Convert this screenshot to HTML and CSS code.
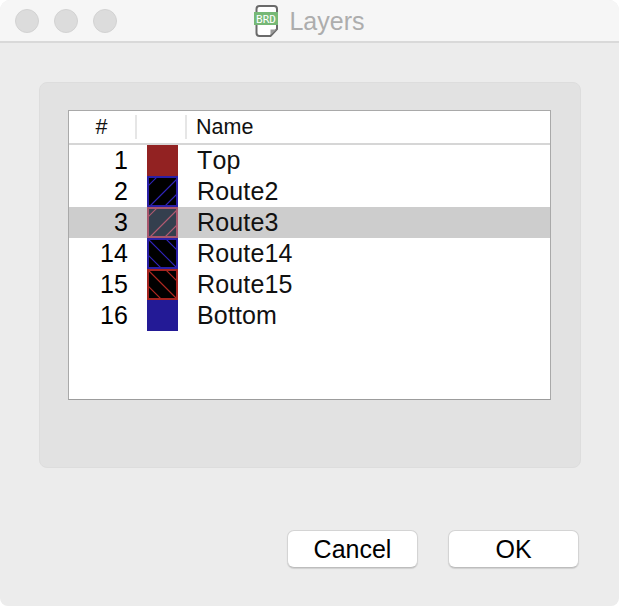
FILE: index.html
```html
<!DOCTYPE html>
<html lang="en">
  <head>
    <meta charset="UTF-8" />
    <title>Layers</title>
    <link rel="stylesheet" href="styles.css">
  </head>
  <body>
    <div class="window">
      <div class="titlebar">
        <div class="lights">
          <span class="light"></span>
          <span class="light"></span>
          <span class="light"></span>
        </div>
        <div class="title">
          <svg class="doc-icon" width="25" height="32" viewBox="0 0 25 32">
            <path d="M2.500 8V4Q2.500 1 5.500 1H20Q23 1 23 4V24L16.500 31H5.500Q2.500 31 2.500 28V20" fill="#fff" stroke="#6a6a6a" stroke-width="2"/>
            <path d="M16.500 30V24.500H22.500Z" fill="#9a9a9a"/>
            <rect x="0" y="7" width="24" height="13" fill="#76b876"/>
            <text x="12" y="17.500" class="doc-text">BRD</text>
          </svg>
          <span class="title-text">Layers</span>
        </div>
      </div>
      <div class="content">
        <div class="panel">
          <div class="layer-list">
            <div class="list-head">
              <div class="head-cell head-num">#</div>
              <div class="head-cell"></div>
              <div class="head-cell head-name">Name</div>
            </div>
            <div class="row">
              <div class="num">1</div>
              <svg class="swatch" width="31" height="31"><rect width="31" height="31" fill="#922222"/></svg>
              <div class="name">Top</div>
            </div>
            <div class="row">
              <div class="num">2</div>
              <svg class="swatch" width="31" height="31">
                <rect width="31" height="31" fill="#000"/>
                <path d="M-1 12L12 -1M3 30L30 3M18 30L30 18" class="hatch" stroke="#2f24b8"/>
                <rect x="1" y="1" width="29" height="29" fill="none" stroke="#2a1fa6" stroke-width="2"/>
              </svg>
              <div class="name">Route2</div>
            </div>
            <div class="row selected">
              <div class="num">3</div>
              <svg class="swatch" width="31" height="31">
                <rect width="31" height="31" fill="#343f4e"/>
                <path d="M-1 12L12 -1M3 30L30 3M18 30L30 18" class="hatch" stroke="#b05a70"/>
                <rect x="1" y="1" width="29" height="29" fill="none" stroke="#a8566c" stroke-width="2"/>
              </svg>
              <div class="name">Route3</div>
            </div>
            <div class="row">
              <div class="num">14</div>
              <svg class="swatch" width="31" height="31">
                <rect width="31" height="31" fill="#000"/>
                <path d="M18 0L31 13M1 1L30 30M0 16L15 31" class="hatch" stroke="#2f24b8"/>
                <rect x="1" y="1" width="29" height="29" fill="none" stroke="#2a1fa6" stroke-width="2"/>
              </svg>
              <div class="name">Route14</div>
            </div>
            <div class="row">
              <div class="num">15</div>
              <svg class="swatch" width="31" height="31">
                <rect width="31" height="31" fill="#000"/>
                <path d="M18 0L31 13M1 1L30 30M0 16L15 31" class="hatch" stroke="#b02820"/>
                <rect x="1" y="1" width="29" height="29" fill="none" stroke="#a52420" stroke-width="2"/>
              </svg>
              <div class="name">Route15</div>
            </div>
            <div class="row">
              <div class="num">16</div>
              <svg class="swatch" width="31" height="31"><rect width="31" height="31" fill="#231a96"/></svg>
              <div class="name">Bottom</div>
            </div>
          </div>
        </div>
        <div class="actions">
          <button class="btn">Cancel</button>
          <button class="btn">OK</button>
        </div>
      </div>
    </div>
  </body>
</html>
```

FILE: styles.css
```css
* {
  margin: 0;
  padding: 0;
  box-sizing: border-box;
  font-family: "Liberation Sans", Arial, sans-serif;
  font-kerning: none;
}

body {
  background: #fff;
  overflow: hidden;
}

.window {
  width: 619px;
  height: 606px;
  background: #ececec;
  border-radius: 10px 10px 8px 8px;
  overflow: hidden;
}

.titlebar {
  height: 43px;
  background: #f6f6f6;
  border-bottom: 2px solid #d9d9d9;
  display: grid;
  grid-template-columns: 1fr auto 1fr;
  align-items: center;
}

.lights {
  display: flex;
  gap: 15px;
  padding-left: 15px;
}

.light {
  width: 24px;
  height: 24px;
  border-radius: 50%;
  background: #dcdcdc;
  border: 1px solid #d2d2d2;
}

.title {
  display: flex;
  align-items: center;
  gap: 10px;
  font-size: 25px;
  color: #adadad;
}

.title-text {
  padding-top: 2px;
}

.doc-text {
  font-family: "DejaVu Sans Mono", monospace;
  font-size: 11px;
  fill: #fff;
  text-anchor: middle;
}

.content {
  padding: 39px 38px 0 39px;
}

.panel {
  height: 386px;
  background: #e2e2e2;
  border: 1px solid #dddddd;
  border-radius: 8px;
  padding: 27px 28px;
}

.layer-list {
  width: 483px;
  height: 290px;
  background: #fff;
  border: 1px solid #a9a9a9;
  border-bottom-color: #9c9c9c;
}

.list-head {
  height: 34px;
  display: grid;
  grid-template-columns: 68px 50px 1fr;
  align-items: center;
  border-bottom: 2px solid #d6d6d6;
  font-size: 21.500px;
  color: #111;
}

.head-cell {
  height: 24px;
  line-height: 24px;
  border-right: 2px solid #e6e6e6;
}

.head-cell:last-child {
  border-right: none;
}

.head-num {
  text-align: center;
  padding-right: 1px;
}

.head-name {
  padding-left: 9px;
}

.row {
  height: 31px;
  display: grid;
  grid-template-columns: 59px 31px 1fr;
  column-gap: 19px;
  align-items: center;
  font-size: 25px;
  letter-spacing: 0.15px;
  color: #000;
}

.row.selected {
  background: #cdcdcd;
}

.num {
  text-align: right;
}

.swatch {
  display: block;
}

.hatch {
  fill: none;
  stroke-width: 1.100;
}

.name {
  color: #111;
}

.actions {
  display: flex;
  justify-content: flex-end;
  gap: 30px;
  margin-top: 62px;
  padding-right: 2px;
}

.btn {
  width: 131px;
  height: 38px;
  background: #fff;
  border: 1px solid #d4d4d4;
  border-bottom-color: #bdbdbd;
  border-radius: 7px;
  box-shadow: 0 1px 1px rgba(0, 0, 0, 0.12);
  font-size: 25px;
  color: #000;
}
```
